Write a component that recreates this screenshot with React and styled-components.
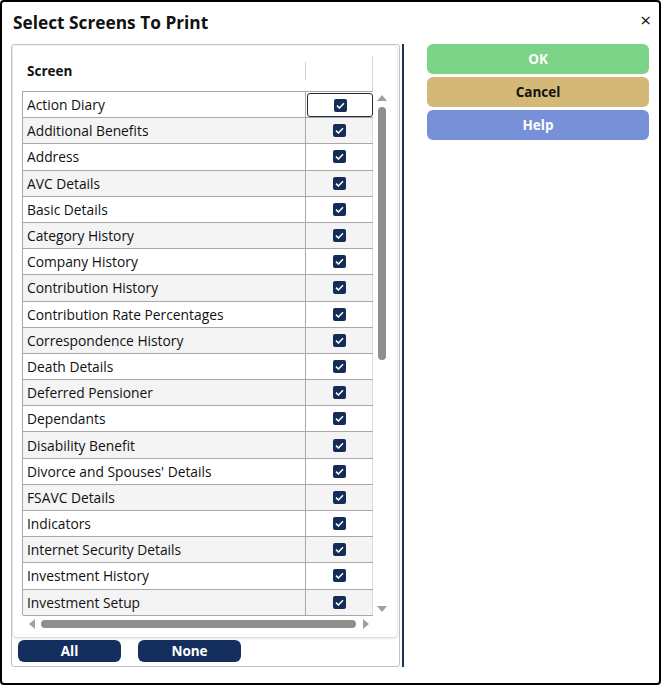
import styled, { createGlobalStyle } from 'styled-components';

const GlobalStyle = createGlobalStyle`
  html, body {
    margin: 0;
    padding: 0;
    background: #fff;
  }
  * {
    box-sizing: border-box;
  }
`;

const SCREENS = [
  'Action Diary',
  'Additional Benefits',
  'Address',
  'AVC Details',
  'Basic Details',
  'Category History',
  'Company History',
  'Contribution History',
  'Contribution Rate Percentages',
  'Correspondence History',
  'Death Details',
  'Deferred Pensioner',
  'Dependants',
  'Disability Benefit',
  "Divorce and Spouses' Details",
  'FSAVC Details',
  'Indicators',
  'Internet Security Details',
  'Investment History',
  'Investment Setup',
];

const Dialog = styled.div`
  width: 661px;
  height: 685px;
  border: 2px solid #000;
  border-radius: 4px;
  background: #fff;
  font-family: 'Open Sans', 'Noto Sans', sans-serif;
  color: #111;
  display: flex;
  flex-direction: column;
`;

const TitleBar = styled.div`
  height: 42px;
  display: flex;
  align-items: center;
  justify-content: space-between;
  padding: 0 8px 2px 11px;
`;

const Title = styled.h1`
  margin: 0;
  font-size: 17.3px;
  font-weight: 700;
  color: #111;
`;

const Close = styled.span`
  font-size: 19px;
  line-height: 1;
  margin-top: -4px;
`;

const Body = styled.div`
  flex: 1;
  display: flex;
  padding: 0 10px 16px 9px;
`;

const Fieldset = styled.div`
  width: 389px;
  border: 1px solid #b9c3d1;
  border-radius: 3px;
  padding: 1px 2px 4px 1px;
  display: flex;
  flex-direction: column;
`;

const Splitter = styled.div`
  width: 2px;
  margin-left: 2px;
  background: #1e3157;
`;

const Card = styled.div`
  height: 591px;
  background: #fff;
  border-radius: 4px;
  box-shadow: 0 1px 3px rgba(0, 0, 0, 0.18), 0 0 1px rgba(0, 0, 0, 0.2);
  padding: 10px 0 0 9px;
  display: grid;
  grid-template-columns: 351px 17px;
  grid-template-rows: 35px 524px 17px;
`;

const HeaderRow = styled.div`
  display: grid;
  grid-template-columns: 284px 67px;
`;

const HeaderCell = styled.div`
  display: flex;
  align-items: center;
  font-size: 13.5px;
  font-weight: 700;
  padding: 0 0 5px 5px;
  position: relative;
  border-right: ${(p) => (p.$last ? '1px solid #d8d8d8' : 'none')};
`;

const HeaderDivider = styled.span`
  position: absolute;
  right: 0;
  top: 6px;
  height: 18px;
  width: 1px;
  background: #cfcfcf;
`;

const Table = styled.div`
  border-top: 1px solid #a9a9a9;
  border-left: 1px solid #a9a9a9;
`;

const Row = styled.div`
  display: grid;
  grid-template-columns: 283px 67px;
  height: 26.2px;
  background: ${(p) => (p.$alt ? '#f4f4f4' : '#fff')};
  border-bottom: 1px solid #a9a9a9;
`;

const NameCell = styled.div`
  font-size: 13.8px;
  display: flex;
  align-items: center;
  padding-left: 4px;
  border-right: 1px solid #a9a9a9;
  white-space: nowrap;
`;

const CheckCell = styled.div`
  display: flex;
  align-items: center;
  justify-content: center;
  margin: ${(p) => (p.$focus ? '1px 0 0 1px' : '0')};
  border: ${(p) => (p.$focus ? '1px solid #1f2b40' : 'none')};
  border-right: ${(p) => (p.$focus ? '1px solid #1f2b40' : '1px solid #dcdcdc')};
  border-radius: ${(p) => (p.$focus ? '3px' : '0')};
`;

const Box = styled.span`
  width: 13px;
  height: 13px;
  border-radius: 2px;
  background: #142c57;
  display: flex;
  align-items: center;
  justify-content: center;
`;

const VScroll = styled.div`
  display: flex;
  flex-direction: column;
  align-items: center;
  padding: 4px 0 3px 0;
`;

const HScroll = styled.div`
  display: flex;
  align-items: center;
  padding: 0 4px 0 7px;
`;

const Thumb = styled.div`
  background: #8e8e8e;
  border-radius: 4px;
  ${(p) =>
    p.$vertical
      ? 'width: 8px; height: 253px; margin: 6px 0 0 0;'
      : 'height: 8px; width: 315px; margin: 0 0 0 6px;'}
`;

const Spacer = styled.div`
  flex: 1;
`;

const ButtonRow = styled.div`
  display: flex;
  gap: 17px;
  padding: 3px 0 0 5px;
`;

const SmallButton = styled.button`
  width: 103px;
  height: 22px;
  border: none;
  border-radius: 6px;
  background: #142f5e;
  color: #fff;
  font-family: 'Open Sans', 'Noto Sans', sans-serif;
  font-size: 13.5px;
  font-weight: 700;
  padding: 0;
`;

const Actions = styled.div`
  flex: 1;
  display: flex;
  flex-direction: column;
  gap: 3px;
  margin-left: 23px;
`;

const ActionButton = styled.button`
  height: 30px;
  border: none;
  border-radius: 6px;
  background: ${(p) => p.$bg};
  color: ${(p) => p.$fg};
  font-family: 'Open Sans', 'Noto Sans', sans-serif;
  font-size: 13.5px;
  font-weight: 700;
  padding: 0;
`;

function Check() {
  return (
    <Box>
      <svg width="9" height="7" viewBox="0 0 9 7">
        <path d="M1 3.6 L3.4 6 L8 1.2" fill="none" stroke="#fff" strokeWidth="1.5" />
      </svg>
    </Box>
  );
}

function Arrow({ dir }) {
  const paths = {
    up: 'M0 6 L5 0 L10 6 Z',
    down: 'M0 0 L10 0 L5 6 Z',
    left: 'M6 0 L6 10 L0 5 Z',
    right: 'M0 0 L6 5 L0 10 Z',
  };
  const vertical = dir === 'up' || dir === 'down';
  return (
    <svg width={vertical ? 10 : 6} height={vertical ? 6 : 10} viewBox={vertical ? '0 0 10 6' : '0 0 6 10'}>
      <path d={paths[dir]} fill="#a0a0a0" />
    </svg>
  );
}

export default function App() {
  return (
    <>
      <GlobalStyle />
      <Dialog>
        <TitleBar>
          <Title>Select Screens To Print</Title>
          <Close>×</Close>
        </TitleBar>
        <Body>
          <Fieldset>
            <Card>
              <HeaderRow>
                <HeaderCell>
                  Screen
                  <HeaderDivider />
                </HeaderCell>
                <HeaderCell $last />
              </HeaderRow>
              <div />
              <Table>
                {SCREENS.map((name, i) => (
                  <Row key={name} $alt={i % 2 === 1}>
                    <NameCell>{name}</NameCell>
                    <CheckCell $focus={i === 0}>
                      <Check />
                    </CheckCell>
                  </Row>
                ))}
              </Table>
              <VScroll>
                <Arrow dir="up" />
                <Thumb $vertical />
                <Spacer />
                <Arrow dir="down" />
              </VScroll>
              <HScroll>
                <Arrow dir="left" />
                <Thumb />
                <Spacer />
                <Arrow dir="right" />
              </HScroll>
              <div />
            </Card>
            <ButtonRow>
              <SmallButton>All</SmallButton>
              <SmallButton>None</SmallButton>
            </ButtonRow>
          </Fieldset>
          <Splitter />
          <Actions>
            <ActionButton $bg="#7bd487" $fg="#fff">OK</ActionButton>
            <ActionButton $bg="#d4b877" $fg="#111">Cancel</ActionButton>
            <ActionButton $bg="#7890d8" $fg="#fff">Help</ActionButton>
          </Actions>
        </Body>
      </Dialog>
    </>
  );
}
